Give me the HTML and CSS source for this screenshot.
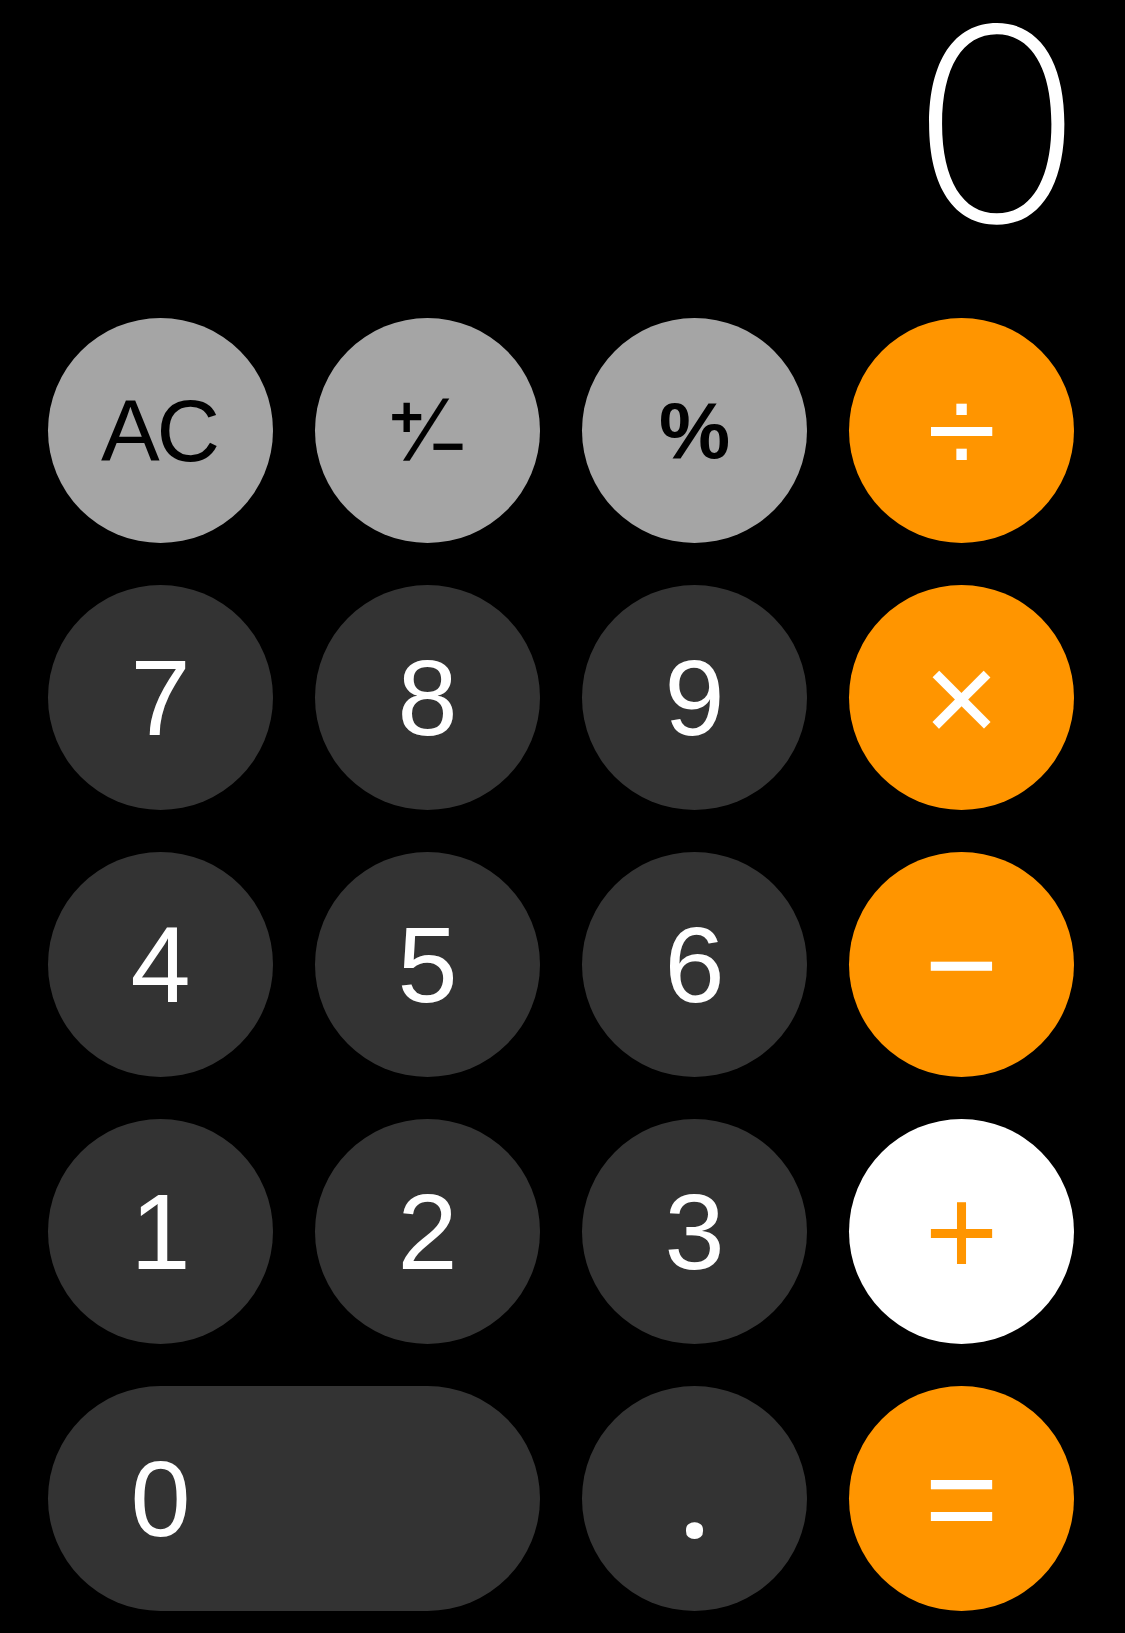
FILE: index.html
```html
<!DOCTYPE html>
<html lang="en">
<head>
    <meta charset="UTF-8">
    <meta name="viewport" content="width=device-width, initial-scale=1.0">
    <title>Calculator</title>
    <link rel="stylesheet" href="styles.css">
</head>
<body>
    <div class="calc">
        <div class="display">0</div>
        <div class="keypad">
            <button class="key fn ac">AC</button>
            <button class="key fn"><span class="pm"><span class="pm-plus">+</span><span class="pm-slash">/</span><span class="pm-minus">−</span></span></button>
            <button class="key fn pct">%</button>
            <button class="key op">÷</button>

            <button class="key num">7</button>
            <button class="key num">8</button>
            <button class="key num">9</button>
            <button class="key op mul">×</button>

            <button class="key num">4</button>
            <button class="key num">5</button>
            <button class="key num">6</button>
            <button class="key op">−</button>

            <button class="key num">1</button>
            <button class="key num">2</button>
            <button class="key num">3</button>
            <button class="key op active">+</button>

            <button class="key num zero"><span class="zero-label">0</span></button>
            <button class="key num dot">.</button>
            <button class="key op">=</button>
        </div>
    </div>
</body>
</html>
```

FILE: styles.css
```css
body {
    margin: 0;
    padding: 0;
    background-color: black;
    color: white;
    font-family: "Liberation Sans", Arial, sans-serif;
}
.calc {
    padding: 0 51px 0 48px;
}
.display {
    margin-right: -10px;
    padding-top: 4px;
    text-align: right;
    font-family: Inter, Roboto, sans-serif;
    font-weight: 200;
    font-size: 270px;
    line-height: 240px;
    transform: scaleX(1.07);
    transform-origin: right center;
}
.keypad {
    margin-top: 74px;
    display: grid;
    grid-template-columns: repeat(4, 225px);
    grid-auto-rows: 225px;
    gap: 42px;
}
.key {
    border: none;
    border-radius: 50%;
    padding: 0;
    margin: 0;
    display: flex;
    align-items: center;
    justify-content: center;
    font-family: "Liberation Sans", Arial, sans-serif;
    line-height: 1;
    cursor: pointer;
    outline: none;
}
.fn {
    background-color: #a5a5a5;
    color: black;
    font-size: 88px;
}
.ac {
    letter-spacing: -3px;
    padding-right: 3px;
}
.pct {
    font-size: 80px;
    font-weight: bold;
}
.pm {
    display: flex;
    align-items: flex-start;
    height: 66px;
    font-weight: bold;
}
.pm-plus {
    font-size: 58px;
    margin-top: -10px;
}
.pm-slash {
    font-size: 85px;
    font-weight: normal;
    margin-top: -10px;
    margin-left: -10px;
    transform: skewX(-20deg);
}
.pm-minus {
    font-size: 58px;
    margin-top: 19px;
    margin-left: -6px;
}
.op {
    background-color: #ff9500;
    color: white;
    font-size: 126px;
}
.op.mul {
    font-size: 130px;
}
.op.active {
    background-color: white;
    color: #ff9500;
}
.num {
    background-color: #333333;
    color: white;
    font-size: 108px;
}
.dot {
    font-family: "Open Sans", "Liberation Sans", sans-serif;
    font-weight: bold;
    font-size: 100px;
}
.zero {
    grid-column: span 2;
    border-radius: 112.5px;
    justify-content: flex-start;
}
.zero-label {
    width: 225px;
    text-align: center;
}
```
